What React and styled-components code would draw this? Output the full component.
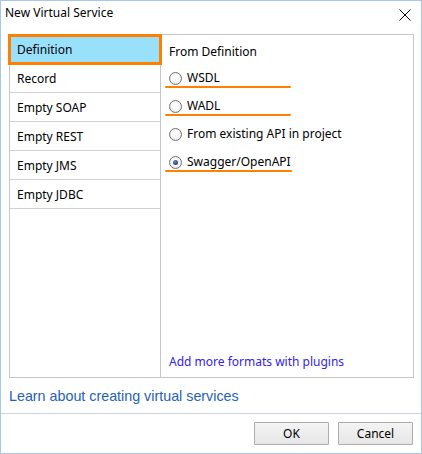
import React from "react";
import styled, { createGlobalStyle, css } from "styled-components";

const Global = createGlobalStyle`
  html, body { margin: 0; padding: 0; background: #ffffff; }
  * { box-sizing: border-box; }
`;

const Window = styled.div`
  width: 422px;
  height: 454px;
  border: 1px solid #a7c8e8;
  background: #ffffff;
  display: flex;
  flex-direction: column;
  font-family: "Noto Sans", "Open Sans", sans-serif;
  font-size: 12px;
  color: #000;
`;

const TitleBar = styled.div`
  height: 33px;
  flex: none;
  display: flex;
  align-items: flex-start;
  justify-content: space-between;
  padding: 4px 0 0 4px;
`;

const Title = styled.span`
  line-height: 16px;
`;

const CloseButton = styled.button`
  border: none;
  background: none;
  padding: 0;
  width: 30px;
  height: 22px;
  margin-top: -1px;
  display: flex;
  align-items: center;
  justify-content: center;
  margin-right: 1px;
`;

const Panel = styled.div`
  margin: 0 7px 0 8px;
  height: 344px;
  flex: none;
  border: 1px solid #c6c6c6;
  display: flex;
`;

const Sidebar = styled.div`
  width: 151px;
  flex: none;
  border-right: 1px solid #c6c6c6;
  display: flex;
  flex-direction: column;
`;

const SideItem = styled.div`
  position: relative;
  height: 29px;
  border-bottom: 1px solid #d2d2d2;
  padding: 1px 0 0 7px;
  display: flex;
  align-items: center;
  line-height: 16px;
  ${(p) =>
    p.$selected &&
    css`
      background: #99e1fb;
    `}
`;

const Highlight = styled.span`
  position: absolute;
  left: -2px;
  right: -2px;
  top: -1px;
  bottom: -2px;
  border: 3px solid #ff8000;
  pointer-events: none;
`;

const Content = styled.div`
  flex: 1;
  display: flex;
  flex-direction: column;
  padding: 9px 0 7px 8px;
`;

const Heading = styled.div`
  line-height: 16px;
  margin-bottom: 4px;
`;

const RadioRow = styled.label`
  position: relative;
  height: 28px;
  display: flex;
  align-items: center;
  gap: 5px;
  line-height: 16px;
  ${(p) =>
    p.$marked &&
    css`
      &::after {
        content: "";
        position: absolute;
        left: -4px;
        width: ${p.$markWidth || 125}px;
        bottom: 4px;
        height: 2.5px;
        background: #ff8000;
        border-radius: 1px;
      }
    `}
`;

const RadioCircle = styled.span`
  width: 13px;
  height: 13px;
  border-radius: 50%;
  border: 1px solid #6f6f6f;
  background: radial-gradient(circle at 50% 40%, #ffffff 0%, #f4f4f4 55%, #dcdcdc 100%);
  display: flex;
  align-items: center;
  justify-content: center;
  flex: none;
  margin-top: 1px;
`;

const RadioDot = styled.span`
  width: 5px;
  height: 5px;
  border-radius: 50%;
  background: radial-gradient(circle at 40% 35%, #6c88bd 0%, #2b4a86 60%, #1c3466 100%);
`;

const PluginLink = styled.a`
  margin-top: auto;
  color: #3322ee;
  line-height: 16px;
  text-decoration: none;
`;

const LearnLink = styled.a`
  font-family: "Liberation Sans", Arial, sans-serif;
  font-size: 14.3px;
  line-height: 20px;
  color: #1f62b4;
  padding-left: 8px;
  margin-top: 8px;
  height: 20px;
  text-decoration: none;
`;

const Footer = styled.div`
  margin-top: 7px;
  border-top: 1px solid #ccd3da;
  padding: 8px 8px 8px 0;
  display: flex;
  justify-content: flex-end;
  gap: 9px;
`;

const Button = styled.button`
  width: 75px;
  height: 23px;
  border: 1px solid #adadad;
  border-radius: 1px;
  background: linear-gradient(#f4f4f4, #e6e6e6);
  font-family: "Noto Sans", "Open Sans", sans-serif;
  font-size: 12px;
  color: #000;
  padding: 0;
  line-height: 16px;
`;

const items = ["Definition", "Record", "Empty SOAP", "Empty REST", "Empty JMS", "Empty JDBC"];

const options = [
  { label: "WSDL", marked: true, w: 126 },
  { label: "WADL", marked: true, w: 126 },
  { label: "From existing API in project", marked: false },
  { label: "Swagger/OpenAPI", marked: true, w: 127, checked: true },
];

export default function App() {
  return (
    <>
      <Global />
      <Window>
        <TitleBar>
          <Title>New Virtual Service</Title>
          <CloseButton aria-label="Close">
            <svg width="12" height="12" viewBox="0 0 12 12">
              <path d="M0.5 0.5 L11.5 11.5 M11.5 0.5 L0.5 11.5" stroke="#000" strokeWidth="1" />
            </svg>
          </CloseButton>
        </TitleBar>
        <Panel>
          <Sidebar>
            {items.map((it, i) => (
              <SideItem key={it} $selected={i === 0}>
                {it}
                {i === 0 && <Highlight />}
              </SideItem>
            ))}
          </Sidebar>
          <Content>
            <Heading>From Definition</Heading>
            {options.map((o) => (
              <RadioRow key={o.label} $marked={o.marked} $markWidth={o.w}>
                <RadioCircle>{o.checked && <RadioDot />}</RadioCircle>
                {o.label}
              </RadioRow>
            ))}
            <PluginLink href="#">Add more formats with plugins</PluginLink>
          </Content>
        </Panel>
        <LearnLink href="#">Learn about creating virtual services</LearnLink>
        <Footer>
          <Button>OK</Button>
          <Button>Cancel</Button>
        </Footer>
      </Window>
    </>
  );
}
